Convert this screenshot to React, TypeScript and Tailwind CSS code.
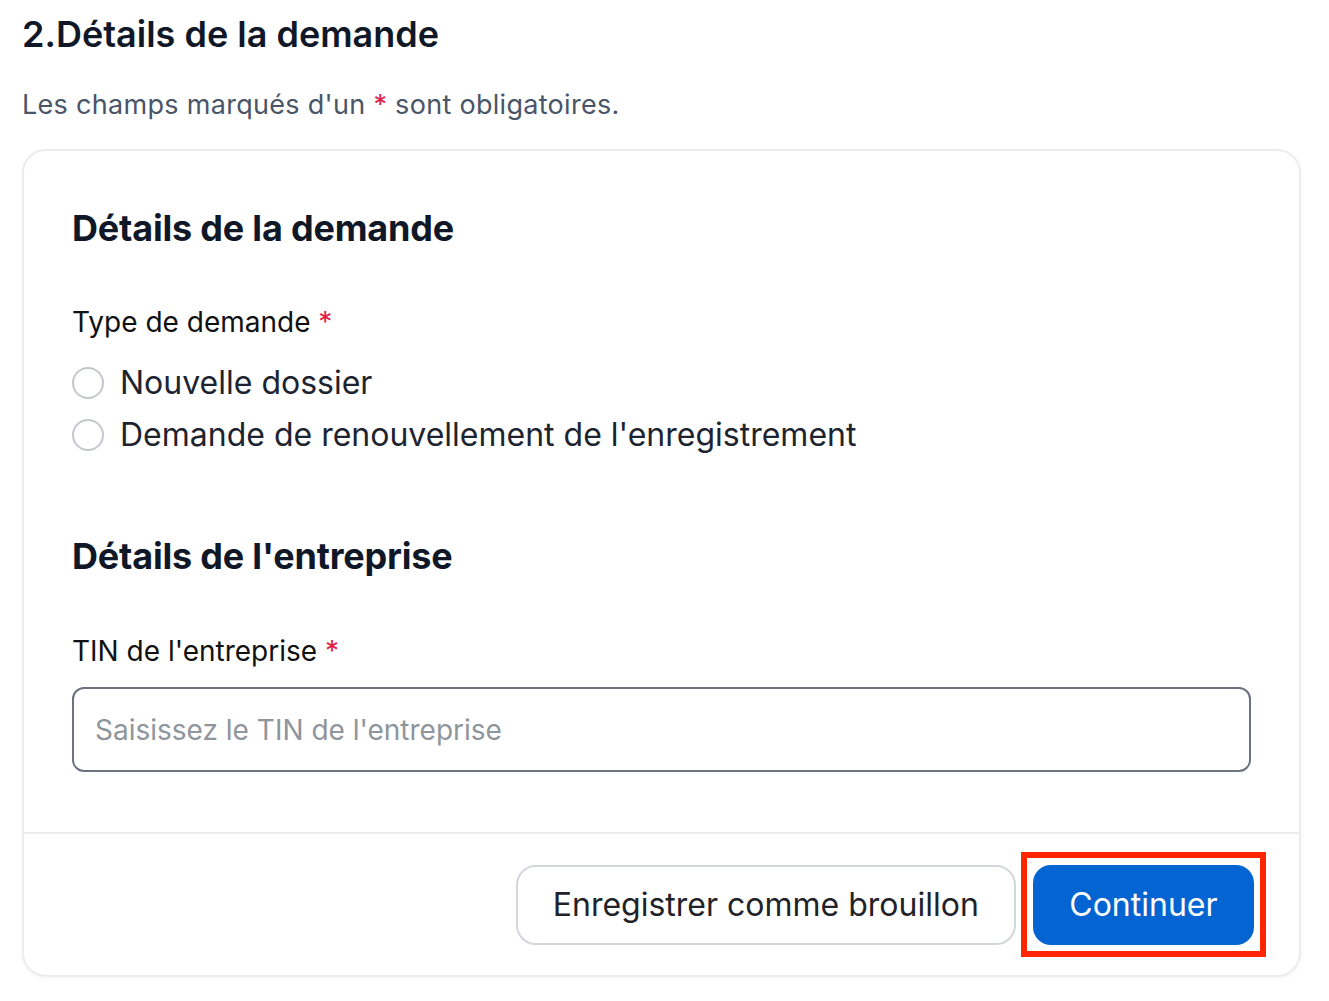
import { useState } from "react";

const FONT = "font-['Inter','Noto_Sans',sans-serif]";

function Req() {
  return <span className="text-[#e11d48]">*</span>;
}

function Radio({ label, checked, onSelect }: { label: string; checked: boolean; onSelect: () => void }) {
  return (
    <label className="flex h-[52px] cursor-pointer items-center gap-4" onClick={onSelect}>
      <span className="flex h-8 w-8 items-center justify-center rounded-full border-2 border-[#c4c7cc] bg-white">
        {checked && <span className="h-4 w-4 rounded-full bg-[#0465d2]" />}
      </span>
      <span className="text-[32px] text-[#1d2430]">{label}</span>
    </label>
  );
}

export default function App() {
  const [type, setType] = useState<string | null>(null);

  return (
    <div className={`${FONT} min-h-screen bg-white pl-[22px] pr-[28px] pt-[12px] pb-6`}>
      <h1 className="text-[36px] font-semibold leading-[44px] text-[#101828]">
        2.Détails de la demande
      </h1>
      <p className="mt-[32px] text-[27px] leading-[34px] tracking-[0.3px] text-[#4a5567]">
        Les champs marqués d'un <Req /> sont obligatoires.
      </p>

      <div className="mt-[27px] rounded-[24px] border-2 border-[#ececf0] bg-white shadow-[0_2px_4px_rgba(16,24,40,0.04)]">
        <div className="px-[48px] pt-[54px] pb-[60px]">
          <h2 className="text-[36px] font-bold leading-[46px] tracking-[-0.2px] text-[#101828]">
            Détails de la demande
          </h2>

          <div className="mt-[53px] text-[28px] leading-[36px] text-[#111]">
            Type de demande <Req />
          </div>
          <div className="mt-[17px] flex flex-col">
            <Radio label="Nouvelle dossier" checked={type === "new"} onSelect={() => setType("new")} />
            <Radio
              label="Demande de renouvellement de l'enregistrement"
              checked={type === "renew"}
              onSelect={() => setType("renew")}
            />
          </div>

          <h2 className="mt-[72px] text-[36px] font-bold leading-[46px] tracking-[-0.2px] text-[#101828]">
            Détails de l'entreprise
          </h2>

          <div className="mt-[54px] text-[28px] leading-[36px] text-[#111]">
            TIN de l'entreprise <Req />
          </div>
          <input
            className="mt-[18px] h-[85px] w-full rounded-[12px] border-2 border-[#6b7280] px-[21px] text-[28px] text-[#111] outline-none placeholder:text-[#8f959c]"
            placeholder="Saisissez le TIN de l'entreprise"
          />
        </div>

        <div className="flex items-center justify-end gap-[5px] border-t-2 border-[#ececf0] pr-[33px] pt-[18px] pb-[18px]">
          <button className="h-[80px] rounded-[20px] border-2 border-[#d3d6dc] bg-white px-[35px] text-[32px] text-[#1f2329]">
            Enregistrer comme brouillon
          </button>
          <div className="border-[6px] border-[#ff2600] p-[6.5px]">
            <button className="h-[80px] rounded-[18px] bg-[#0465d2] px-[36px] text-[32px] text-white">
              Continuer
            </button>
          </div>
        </div>
      </div>
    </div>
  );
}
